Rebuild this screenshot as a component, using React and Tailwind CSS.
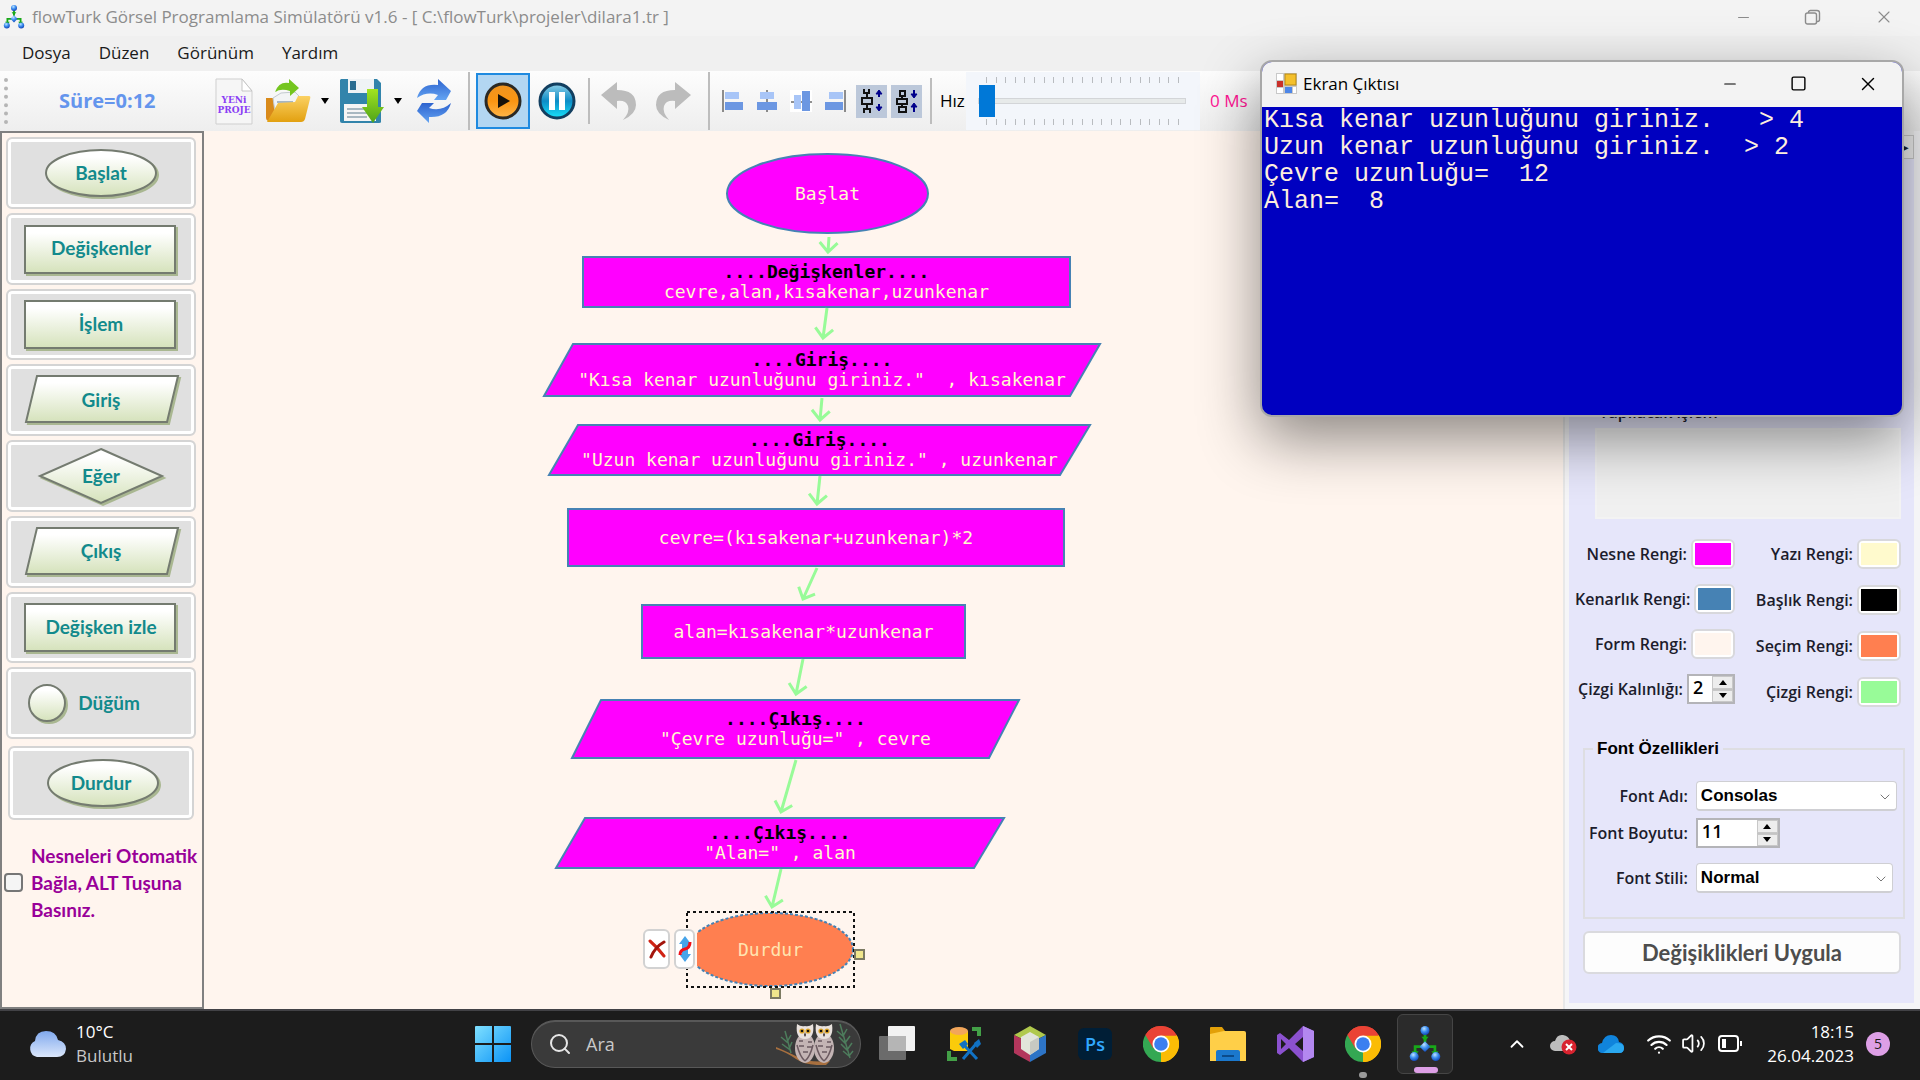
import React from "react";
import { Minus, Square, X, Search, ChevronUp, ChevronDown, Wifi, Volume2 } from "lucide-react";

const NODES = [
  { shape: "ellipse", x: 522, y: 22, w: 203, h: 81, text: "Başlat" },
  { shape: "rect", x: 378, y: 125, w: 489, h: 52, title: "....Değişkenler....", text: "cevre,alan,kısakenar,uzunkenar" },
  { shape: "para", x: 339, y: 212, w: 558, h: 54, title: "....Giriş....", text: '"Kısa kenar uzunluğunu giriniz."  , kısakenar' },
  { shape: "para", x: 344, y: 293, w: 543, h: 52, title: "....Giriş....", text: '"Uzun kenar uzunluğunu giriniz." , uzunkenar' },
  { shape: "rect", x: 363, y: 377, w: 498, h: 59, text: "cevre=(kısakenar+uzunkenar)*2" },
  { shape: "rect", x: 437, y: 473, w: 325, h: 55, text: "alan=kısakenar*uzunkenar" },
  { shape: "para", x: 367, y: 568, w: 449, h: 60, title: "....Çıkış....", text: '"Çevre uzunluğu=" , cevre' },
  { shape: "para", x: 351, y: 686, w: 450, h: 52, title: "....Çıkış....", text: '"Alan=" , alan' },
  { shape: "ellipse", x: 483, y: 781, w: 167, h: 75, text: "Durdur", selected: true },
];

const ARROWS = [
  [625, 106, 624, 121],
  [623, 177, 619, 207],
  [618, 267, 616, 289],
  [616, 345, 613, 373],
  [613, 437, 599, 468],
  [599, 528, 592, 563],
  [592, 629, 577, 681],
  [577, 738, 568, 776],
];

function arrowPath([x1, y1, x2, y2]) {
  const a = Math.atan2(y2 - y1, x2 - x1);
  const arm = (d) => `${x2 - 13 * Math.cos(a + d)} ${y2 - 13 * Math.sin(a + d)}`;
  return `M${x1} ${y1}L${x2} ${y2}M${arm(0.76)}L${x2} ${y2}L${arm(-0.76)}`;
}

function FlowNode({ node }) {
  const { shape, x, y, w, h, title, text, selected } = node;
  const fill = selected ? "#ff7f50" : "#ff00ff";
  const common = { fill, stroke: "#4682b4", strokeWidth: 2 };
  return (
    <div className="absolute flex flex-col items-center justify-center" style={{ left: x, top: y, width: w, height: h }}>
      <svg className="absolute inset-0 h-full w-full overflow-visible" viewBox={`0 0 ${w} ${h}`} aria-hidden="true">
        {shape === "ellipse" && <ellipse cx={w / 2} cy={h / 2} rx={w / 2 - 1} ry={h / 2 - 1} {...common} strokeDasharray={selected ? "3 2" : undefined} />}
        {shape === "rect" && <rect x="1" y="1" width={w - 2} height={h - 2} {...common} />}
        {shape === "para" && <polygon points={`30,1 ${w - 1},1 ${w - 31},${h - 1} 1,${h - 1}`} {...common} />}
      </svg>
      {title && <span className="relative font-bold whitespace-pre text-black">{title}</span>}
      <span className={selected ? "relative whitespace-pre text-[#ffe4b0]" : "relative whitespace-pre text-[#fffacd]"}>{text}</span>
    </div>
  );
}

function Logo({ className }) {
  return (
    <svg className={className} viewBox="0 0 36 40" aria-hidden="true">
      <defs>
        <radialGradient id="ball" cx="0.4" cy="0.3" r="0.7">
          <stop offset="0" stopColor="#bfe3ff" />
          <stop offset="0.5" stopColor="#3d8ff0" />
          <stop offset="1" stopColor="#1447b8" />
        </radialGradient>
      </defs>
      <g fill="none" stroke="#18a818" strokeWidth="3">
        <path d="M18 8v10M14 23H7v8M22 23h7v8" />
      </g>
      <path d="M14 12h8l-4 5zM3 28h8l-4 5zM25 28h8l-4 5z" fill="#18a818" />
      <path d="M18 17l6 6-6 6-6-6z" fill="url(#ball)" />
      <circle cx="18" cy="5" r="5" fill="url(#ball)" />
      <circle cx="6" cy="34" r="5" fill="url(#ball)" />
      <circle cx="30" cy="34" r="5" fill="url(#ball)" />
    </svg>
  );
}

function TitleBar() {
  return (
    <header className="flex h-9 shrink-0 items-center bg-[#f3f3f3] pb-0.5 pl-0.5 text-[#8c8c8c]">
      <Logo className="h-6 w-6" />
      <h1 className="ml-1.5 flex-1 text-[17px] whitespace-nowrap">flowTurk Görsel Programlama Simülatörü v1.6 - [ C:\flowTurk\projeler\dilara1.tr ]</h1>
      <button aria-label="Simge durumuna küçült" className="flex w-[69px] justify-center"><Minus size={17} strokeWidth={1.5} /></button>
      <button aria-label="Önceki boyut" className="flex w-[69px] justify-center">
        <svg width="17" height="17" viewBox="0 0 17 17" fill="none" stroke="currentColor" strokeWidth="1.4">
          <rect x="1.5" y="4" width="11" height="11" rx="2" />
          <path d="M4.5 4V3.500a2 2 0 0 1 2-2h6.500a2.500 2.500 0 0 1 2.500 2.500v6.500a2 2 0 0 1-2 2h-1" />
        </svg>
      </button>
      <button aria-label="Kapat" className="flex w-[73px] justify-center"><X size={20} strokeWidth={1.3} /></button>
    </header>
  );
}

function MenuBar() {
  return (
    <nav className="flex h-[35px] shrink-0 items-center gap-7 bg-[#f0f0f0] pb-0.5 pl-[22px] text-[17px] text-[#1a1a1a]">
      {["Dosya", "Düzen", "Görünüm", "Yardım"].map((m) => <button key={m}>{m}</button>)}
    </nav>
  );
}

const Divider = ({ className = "" }) => <div className={`h-[46px] w-0.5 shrink-0 bg-[#bdbdbd] ${className}`} />;
const Caret = () => <svg width="8" height="6" viewBox="0 0 8 6" aria-hidden="true"><path d="M0 0h8L4 6z" /></svg>;

function NewIcon() {
  return (
    <span className="relative flex h-[47px] w-[38px] flex-col items-center justify-center font-['DejaVu_Serif'] text-[9px] leading-[10px] font-bold text-[#8b3ff5]">
      <svg className="absolute inset-0" width="38" height="47" viewBox="0 0 38 47" aria-hidden="true">
        <path d="M1 1h26l10 12v33H1z" fill="#f6f6f6" stroke="#cfcfcf" />
        <path d="M27 1v12h10z" fill="#fff" stroke="#c5c5c5" />
      </svg>
      <span className="relative mt-2">YENi</span>
      <span className="relative">PROJE</span>
    </span>
  );
}

function OpenIcon() {
  return (
    <svg width="46" height="46" viewBox="0 0 46 46" aria-hidden="true">
      <defs><linearGradient id="fold" x2="0" y2="1"><stop stopColor="#fbd163" /><stop offset="1" stopColor="#e2a010" /></linearGradient></defs>
      <path d="M1 20h8l3 3h6v20H3q-2-1-2-3z" fill="#d98a1a" />
      <path d="M8 20l8-5 14-1 6 6-2 14H10z" fill="#f2f4f5" stroke="#c3cacf" />
      <path d="M12 24h16M12 28h14" stroke="#a7b6c2" strokeWidth="2" />
      <path d="M13 25l17-1 3-6h11q2 0 1 3l-5 20q-1 3-4 3H2z" fill="url(#fold)" />
      <path d="M10 14Q14 3 24 5V1l10 9-9 8v-5Q16 10 10 14z" fill="#74c51f" />
    </svg>
  );
}

function SaveIcon() {
  return (
    <svg width="45" height="46" viewBox="0 0 45 46" aria-hidden="true">
      <defs><linearGradient id="arr" x2="0" y2="1"><stop stopColor="#a2e41f" /><stop offset="1" stopColor="#4ea31a" /></linearGradient></defs>
      <path d="M2 1h36l4 4v39q0 1-2 1H3q-2 0-2-2V2z" fill="#3284ab" />
      <path d="M9 1h26v14H9z" fill="#eff3f5" />
      <path d="M11 3h6v9h-6z" fill="#2a6d91" />
      <path d="M5 26h32v17H5z" fill="#f5f5f5" />
      <path d="M8 31h20M8 35h20M8 39h20" stroke="#8fa4b0" strokeWidth="1.500" />
      <path d="M28 11h11v18h6L34 45 23 29h5z" fill="url(#arr)" />
    </svg>
  );
}

function RefreshIcon() {
  return (
    <svg width="36" height="46" viewBox="0 0 36 46" aria-hidden="true">
      <defs><linearGradient id="rf" x2="0" y2="1"><stop stopColor="#2d63cf" /><stop offset="1" stopColor="#64a4f2" /></linearGradient></defs>
      <path d="M1 20Q5 5 22 7V1l13 12-5 9H18l4-5Q11 13 1 20z" fill="url(#rf)" />
      <path d="M35 25Q31 40 13 39v6L1 33l5-8h12l-5 5q12 4 22-5z" fill="url(#rf)" />
    </svg>
  );
}

function RoundIcon({ pause }) {
  return (
    <svg width="38" height="38" viewBox="0 0 38 38" aria-hidden="true">
      <defs>
        <linearGradient id="gor" x2="0" y2="1"><stop stopColor="#ee9422" /><stop offset="0.5" stopColor="#fb9512" /><stop offset="1" stopColor="#ffb64a" /></linearGradient>
        <linearGradient id="gbl" x2="0" y2="1"><stop stopColor="#8fd0e8" /><stop offset="0.5" stopColor="#0d8cc6" /><stop offset="1" stopColor="#19e3fb" /></linearGradient>
      </defs>
      <circle cx="19" cy="19" r="17" fill={pause ? "url(#gbl)" : "url(#gor)"} stroke={pause ? "#123f60" : "#2b2925"} strokeWidth="3" />
      {pause ? <path d="M11 10h6v18h-6zM21 10h6v18h-6z" fill="#fff" /> : <path d="M14 12l12 7-12 7z" fill="#17120a" />}
    </svg>
  );
}

function Undo({ flip }) {
  return (
    <svg className={flip ? "-scale-x-100" : ""} width="38" height="40" viewBox="0 0 38 40" aria-hidden="true">
      <path d="M1 14L17 1v8Q36 9 36 24 36 33 23 39 30 31 28 25 26 19 17 20v8z" fill="#bcbcbc" />
    </svg>
  );
}

function AlignIcon({ kind }) {
  const bars = {
    left: <><path d="M1 0v22" stroke="#222" /><rect x="3" y="2" width="14" height="7" fill="#a8c5f7" /><rect x="3" y="12" width="18" height="8" fill="#6c97e2" /></>,
    center: <><path d="M11 0v22" stroke="#222" /><rect x="4" y="2" width="14" height="7" fill="#a8c5f7" /><rect x="1" y="12" width="20" height="8" fill="#6c97e2" /></>,
    middle: <><path d="M1 12h21" stroke="#222" /><rect x="4" y="5" width="7" height="14" fill="#a8c5f7" /><rect x="12" y="1" width="8" height="20" fill="#6c97e2" /></>,
    right: <><path d="M21 0v22" stroke="#222" /><rect x="5" y="2" width="14" height="7" fill="#a8c5f7" /><rect x="1" y="12" width="18" height="8" fill="#6c97e2" /></>,
  };
  return <svg width="22" height="22" viewBox="0 0 22 22" aria-hidden="true">{bars[kind]}</svg>;
}

function SpacingIcon({ out }) {
  return (
    <svg width="24" height="26" viewBox="0 0 24 26" fill="none" stroke="#111" strokeWidth="2" aria-hidden="true">
      {out ? <path d="M4 1v4h5V1M7 5v5M2 10h10v6H2zM7 16v4M4 25v-4h6v4" /> : <path d="M5 3h5v5H5zM7 8v3M2 11h10v5H2zM7 16v3M4 19h7v5H4z" />}
      <g stroke="#00008b" fill="#00008b">
        {out ? <><path d="M19 9V3M19 16v6" /><path d="M16 6l3-4 3 4zM16 19l3 4 3-4z" strokeWidth="1" /></> : <><path d="M19 9V2M19 17v7" /><path d="M16 6l3 4 3-4zM16 19l3-4 3 4z" strokeWidth="1" /></>}
      </g>
    </svg>
  );
}

function Ticks() {
  return (
    <div className="ml-2 flex w-[193px] justify-between" aria-hidden="true">
      {Array.from({ length: 21 }, (_, i) => <span key={i} className="h-1.5 w-px bg-[#b9bcc0]" />)}
    </div>
  );
}

function Toolbar() {
  return (
    <div className="flex h-[60px] shrink-0 items-center bg-linear-to-b from-[#fdfdfd] to-[#eeeeee]">
      <div className="ml-1 h-[46px] border-l-4 border-dotted border-[#b5b5b5]" />
      <span className="ml-[51px] w-[156px] text-[20px] font-bold text-[#6495ed]">Süre=0:12</span>
      <button aria-label="Yeni proje"><NewIcon /></button>
      <button aria-label="Aç" className="ml-3"><OpenIcon /></button>
      <button aria-label="Son projeler" className="ml-2.5"><Caret /></button>
      <button aria-label="Kaydet" className="ml-2.5"><SaveIcon /></button>
      <button aria-label="Farklı kaydet" className="ml-2.5"><Caret /></button>
      <button aria-label="Yenile" className="ml-3.5"><RefreshIcon /></button>
      <div className="ml-4 h-[58px] w-0.5 shrink-0 bg-[#bdbdbd]" />
      <button aria-label="Çalıştır" className="ml-1.5 flex h-14 w-[54px] items-center justify-center border-2 border-[#1f8ae0] bg-[#b3d6f2]"><RoundIcon /></button>
      <button aria-label="Duraklat" className="ml-2"><RoundIcon pause /></button>
      <Divider className="ml-3" />
      <button aria-label="Geri al" className="ml-2.5"><Undo /></button>
      <button aria-label="Yinele" className="ml-4"><Undo flip /></button>
      <div className="ml-4 h-[58px] w-0.5 shrink-0 bg-[#bdbdbd]" />
      <div className="ml-3 flex items-center gap-3">
        <button aria-label="Sola hizala"><AlignIcon kind="left" /></button>
        <button aria-label="Ortala"><AlignIcon kind="center" /></button>
        <button aria-label="Dikey ortala" className="bg-white"><AlignIcon kind="middle" /></button>
        <button aria-label="Sağa hizala"><AlignIcon kind="right" /></button>
      </div>
      <button aria-label="Aralığı artır" className="ml-2.5 flex h-[33px] w-[31px] items-center justify-center bg-[#bcc8da]"><SpacingIcon out /></button>
      <button aria-label="Aralığı azalt" className="ml-1 flex h-[33px] w-[31px] items-center justify-center bg-[#bcc8da]"><SpacingIcon /></button>
      <Divider className="ml-2" />
      <label htmlFor="speed" className="ml-2 w-[26px] text-[17px] text-black">Hız</label>
      <div className="flex h-[58px] w-[234px] flex-col justify-center bg-[#f3f6fb] px-3">
        <Ticks />
        <input id="speed" type="range" min="0" max="20" defaultValue="0" className="my-0.5 h-8 w-[208px] appearance-none bg-transparent [&::-webkit-slider-runnable-track]:h-1.5 [&::-webkit-slider-runnable-track]:border [&::-webkit-slider-runnable-track]:border-[#d3d5d8] [&::-webkit-slider-runnable-track]:bg-[#e7eaea] [&::-webkit-slider-thumb]:-mt-3.5 [&::-webkit-slider-thumb]:h-8 [&::-webkit-slider-thumb]:w-4 [&::-webkit-slider-thumb]:appearance-none [&::-webkit-slider-thumb]:bg-[#0078d7]" />
        <Ticks />
      </div>
      <span className="ml-2.5 w-12 text-[17px] whitespace-nowrap text-[#ff1493]">0 Ms</span>
      <Divider className="ml-0.5" />
    </div>
  );
}

function PaletteShape({ kind }) {
  const shapes = {
    ellipse: <ellipse cx="95" cy="36" rx="55" ry="23" />,
    rect: <rect x="19" y="13" width="150" height="47" />,
    para: <path d="M31 12H172L161 58H20z" />,
    diamond: <path d="M95 9l61 27-61 27-61-27z" />,
    circle: <circle cx="41" cy="36" r="18" />,
  };
  return (
    <svg className="absolute -inset-0.5 m-auto drop-shadow-[2px_2px_0_#a9b791]" width="190" height="72" viewBox="0 0 190 72" fill="url(#pal)" stroke="#747b70" strokeWidth="2" aria-hidden="true">
      <defs><linearGradient id="pal" x2="0" y2="1"><stop offset="0.150" stopColor="#ffffff" /><stop offset="1" stopColor="#d5e2bb" /></linearGradient></defs>
      {shapes[kind]}
    </svg>
  );
}

function PaletteButton({ kind, label }) {
  return (
    <button className="relative flex w-full items-center justify-center rounded-md border-2 border-[#d4d4d4] bg-[#e0e0e0] ring-3 ring-white ring-inset">
      <PaletteShape kind={kind} />
      <span className={kind === "circle" ? "relative ml-4" : "relative"}>{label}</span>
    </button>
  );
}

const PALETTE = [
  ["ellipse", "Başlat"],
  ["rect", "Değişkenler"],
  ["rect", "İşlem"],
  ["para", "Giriş"],
  ["diamond", "Eğer"],
  ["para", "Çıkış"],
  ["rect", "Değişken izle"],
  ["circle", "Düğüm"],
];

function Palette() {
  return (
    <aside className="w-[204px] shrink-0 border-2 border-[#808080] bg-[#fff5ee] pt-1 pl-1 font-['Lato'] text-[19px] font-bold text-[#128a8c]">
      <div className="grid h-[602px] w-[190px] grid-rows-8 gap-1">
        {PALETTE.map(([kind, label]) => <PaletteButton key={label} kind={kind} label={label} />)}
      </div>
      <div className="mt-[7px] grid h-[74px] w-[188px] pl-0.5"><PaletteButton kind="ellipse" label="Durdur" /></div>
      <label className="-ml-1 mt-[22px] flex items-center pl-0.5 leading-[27px] text-[#990099]">
        <input type="checkbox" className="mr-2 h-[19px] w-[19px] shrink-0 appearance-none rounded-[4px] border-2 border-[#767676] bg-[#f5f5f5]" />
        <span className="whitespace-nowrap">Nesneleri Otomatik<br />Bağla, ALT Tuşuna<br />Basınız.</span>
      </label>
    </aside>
  );
}

function Canvas() {
  return (
    <main className="relative min-w-0 flex-1 overflow-hidden bg-[#fff5ee] font-['DejaVu_Sans_Mono',monospace] text-[18px] leading-5">
      {NODES.map((n) => <FlowNode key={n.y} node={n} />)}
      <svg className="pointer-events-none absolute inset-0 h-full w-full" aria-hidden="true">
        <g fill="none" stroke="#98fb98" strokeWidth="3">{ARROWS.map((a) => <path key={a[1]} d={arrowPath(a)} />)}</g>
        <rect x="483" y="781" width="167" height="75" fill="none" stroke="#111" strokeWidth="2" strokeDasharray="3 3" />
        <g fill="#f0e68c" stroke="#7c7a62" strokeWidth="2">
          <rect x="651" y="819" width="9" height="9" />
          <rect x="567" y="858" width="9" height="9" />
        </g>
      </svg>
      <div className="absolute top-[798px] left-[439px] flex gap-1 bg-[#fff5ee] pr-0.5">
        <button aria-label="Sil" className="flex h-[40px] w-[27px] items-center justify-center rounded-md border-2 border-[#d2d2d2] bg-white">
          <svg width="18" height="20" viewBox="0 0 18 20" fill="none" strokeLinecap="round" aria-hidden="true"><path d="M2 2Q9 8 16 17" stroke="#d02314" strokeWidth="3" /><path d="M16 3Q7 8 3 18" stroke="#a3150d" strokeWidth="3" /></svg>
        </button>
        <button aria-label="Bağlantıyı kes" className="flex h-[40px] w-[21px] items-center justify-center rounded-md border-2 border-[#d2d2d2] bg-white">
          <svg width="14" height="26" viewBox="0 0 14 26" aria-hidden="true"><path d="M7 0l6 8h-3v10h3l-6 8-6-8h3V8H1z" fill="#46a4ea" /><path d="M2 19Q2 14 7 13T12 6" fill="none" stroke="#f01018" strokeWidth="3" /></svg>
        </button>
      </div>
    </main>
  );
}

function Swatch({ label, color }) {
  return (
    <div className="flex items-center justify-end gap-1">
      <span className="whitespace-nowrap">{label}</span>
      <button aria-label={label} className="h-[30px] w-[44px] rounded-md border-2 border-[#d8d8dc] bg-white p-0.5"><span className={`block h-full w-full ${color}`} /></button>
    </div>
  );
}

function Spinner({ id, value, width }) {
  return (
    <div className={`flex h-[30px] border-2 border-[#b4b4b8] bg-white ${width}`}>
      <input id={id} defaultValue={value} className="w-0 min-w-0 flex-1 pb-1 pl-1 text-[18px] leading-6 font-semibold text-black outline-none" />
      <span className="flex w-[21px] flex-col gap-px bg-[#c4c4c4]">
        <button aria-label="Artır" className="flex flex-1 items-center justify-center border border-[#c8c8c8] bg-[#ededed]"><svg width="8" height="5" viewBox="0 0 8 5"><path d="M0 5h8L4 0z" /></svg></button>
        <button aria-label="Azalt" className="flex flex-1 items-center justify-center border border-[#c8c8c8] bg-[#ededed]"><svg width="8" height="5" viewBox="0 0 8 5"><path d="M0 0h8L4 5z" /></svg></button>
      </span>
    </div>
  );
}

function Select({ id, value, width }) {
  return (
    <div className={`relative h-[30px] ${width}`}>
      <select id={id} defaultValue={value} className="h-full w-full appearance-none rounded-sm border border-b-2 border-[#cfcfd3] bg-white pl-1 font-['Liberation_Sans'] text-[17px] font-bold text-black"><option>{value}</option></select>
      <ChevronDown className="pointer-events-none absolute top-2 right-1 text-[#777]" size={16} strokeWidth={1.500} />
    </div>
  );
}

function Properties() {
  return (
    <aside className="flex w-[357px] shrink-0 flex-col border-l-2 border-[#e8e8e8] bg-[#f5f5f7] pr-1.5 pb-1.5 pl-1 font-['Open_Sans'] text-[16px] font-semibold text-[#1c1c2c]">
      <div className="flex h-7 justify-end bg-[#f0f0f0]"><button aria-label="Sekmeler" className="mt-1 w-5 border border-[#c8c8c8] text-[14px] leading-none">▸</button></div>
      <div className="flex flex-1 flex-col bg-[#e6e6fa] pr-[13px] pl-3.5">
        <label htmlFor="todo" className="mt-[239px] ml-4 leading-7">Yapılacak işlem</label>
        <textarea id="todo" readOnly className="ml-3 mt-0.5 h-[91px] resize-none border-2 border-[#f3f3f3] bg-[#f0f0f0]" />
        <div className="mt-5 flex justify-between">
          <div className="-ml-2 flex w-[160px] flex-col gap-[15px]">
            <Swatch label="Nesne Rengi:" color="bg-[#ff00ff]" />
            <Swatch label="Kenarlık Rengi:" color="bg-[#4682b4]" />
            <Swatch label="Form Rengi:" color="bg-[#fff5ee]" />
            <div className="flex items-center justify-end gap-1">
              <label htmlFor="thick" className="whitespace-nowrap">Çizgi Kalınlığı:</label>
              <Spinner id="thick" value="2" width="w-[48px]" />
            </div>
          </div>
          <div className="flex w-[150px] flex-col gap-4">
            <Swatch label="Yazı Rengi:" color="bg-[#fffacd]" />
            <Swatch label="Başlık Rengi:" color="bg-black" />
            <Swatch label="Seçim Rengi:" color="bg-[#ff7f50]" />
            <Swatch label="Çizgi Rengi:" color="bg-[#98fb98]" />
          </div>
        </div>
        <fieldset className="mt-[30px] -mr-1 h-[182px] border-2 border-[#dedee2] pl-1">
          <legend className="ml-1 px-1 font-['Liberation_Sans'] text-[17px] leading-6 font-bold text-black">Font Özellikleri</legend>
          <div className="mt-5 grid grid-cols-[auto_1fr] items-center gap-x-2 gap-y-[7px]">
            <label htmlFor="font" className="text-right whitespace-nowrap">Font Adı:</label>
            <Select id="font" value="Consolas" width="w-[201px]" />
            <label htmlFor="size" className="text-right whitespace-nowrap">Font Boyutu:</label>
            <Spinner id="size" value="11" width="w-[84px]" />
            <label htmlFor="style" className="mt-2 text-right whitespace-nowrap">Font Stili:</label>
            <div className="mt-2"><Select id="style" value="Normal" width="w-[197px]" /></div>
          </div>
        </fieldset>
        <button className="mt-3 h-[43px] rounded-md border-2 border-[#dadade] bg-[#fdfdfd] font-['Lato'] text-[22px] font-bold text-[#4d4d4d]">Değişiklikleri Uygula</button>
      </div>
    </aside>
  );
}

function OutputWindow() {
  return (
    <section className="absolute top-[60px] right-4 w-[644px] overflow-hidden rounded-xl border-2 border-[#a8a8a8] bg-[#0000c0] shadow-[0_22px_60px_rgba(0,0,0,0.45)]">
      <div className="flex h-[45px] items-center bg-[#f3f3f3] pb-0.5 pl-3.5 text-black">
        <svg width="21" height="21" viewBox="0 0 21 21" aria-hidden="true">
          <rect width="21" height="21" fill="#c9c9c9" />
          <rect x="1" y="1" width="6" height="6" fill="#fff" /><rect x="1" y="15" width="6" height="5" fill="#fff" /><rect x="17" y="14" width="3" height="6" fill="#fff" />
          <rect x="9" y="1" width="11" height="11" fill="#f4c02c" stroke="#b98a12" /><rect x="1" y="8" width="6" height="6" fill="#c9302a" /><rect x="9" y="14" width="7" height="6" fill="#4d86e8" />
        </svg>
        <h2 className="ml-1.5 flex-1 text-[17px]">Ekran Çıktısı</h2>
        <button aria-label="Küçült" className="flex w-[69px] justify-center"><Minus size={18} strokeWidth={1.500} /></button>
        <button aria-label="Büyüt" className="flex w-[69px] justify-center"><Square size={17} strokeWidth={2} /></button>
        <button aria-label="Kapat" className="flex w-[69px] justify-center"><X size={22} strokeWidth={1.500} /></button>
      </div>
      <pre className="h-[308px] pl-0.5 font-['Liberation_Mono',monospace] text-[25px] leading-[27px] text-[#fdeedd]">
        {"Kısa kenar uzunluğunu giriniz.   > 4\nUzun kenar uzunluğunu giriniz.  > 2\nÇevre uzunluğu=  12\nAlan=  8"}
      </pre>
    </section>
  );
}

function Chrome() {
  return (
    <svg width="36" height="36" viewBox="0 0 36 36" aria-hidden="true">
      <path d="M18 18L2.400 9A18 18 0 0 1 33.600 9z" fill="#ea4335" />
      <path d="M18 18L33.600 9A18 18 0 0 1 18 36z" fill="#fbbc05" />
      <path d="M18 18v18A18 18 0 0 1 2.400 9z" fill="#34a853" />
      <path d="M18 9.500h15.800A18 18 0 0 1 18 36l7.800-14z" fill="#fbbc05" />
      <path d="M18 9.500h15.800A18 18 0 0 0 2.400 9l8 13.500z" fill="#ea4335" />
      <circle cx="18" cy="18" r="8.500" fill="#fff" /><circle cx="18" cy="18" r="6.800" fill="#3b7ff0" />
    </svg>
  );
}

function Owls() {
  const owl = (x) => (
    <g transform={`translate(${x} 0)`}>
      <ellipse cx="9" cy="25" rx="10" ry="15" fill="#c3b4b4" />
      <path d="M1 22q3 12 8 16M17 22q-3 12-8 16M3 18h4M3 23h5M12 19h4M11 24h5M7 29h5" stroke="#6b5a60" strokeWidth="1.500" fill="none" />
      <path d="M1 1q4 3 8 2 4 1 8-2 2 15-8 15T1 1z" fill="#e9e2de" />
      <circle cx="6" cy="8" r="2.600" fill="#e2a92c" /><circle cx="12" cy="8" r="2.600" fill="#e2a92c" />
      <circle cx="6" cy="8" r="1.300" fill="#111" /><circle cx="12" cy="8" r="1.300" fill="#111" />
      <path d="M9 9l-1 3 1 2 1-2z" fill="#3a3030" />
    </g>
  );
  return (
    <svg width="80" height="42" viewBox="0 0 80 42" aria-hidden="true">
      <g stroke="#4d7c5c" strokeWidth="1.500"><path d="M64 1l10 34M61 8l6 5 4-7M63 14l6 6 5-7M65 21l6 6 5-7M67 28l6 5 4-5M9 8l6 22M5 14l6 5 4-7M6 21l7 5 3-7" fill="none" /></g>
      <path d="M0 24Q14 30 24 35t30 3l-4 4Q30 43 20 36T0 26z" fill="#a8703f" />
      {owl(20)}{owl(39)}
    </svg>
  );
}

function Taskbar() {
  return (
    <footer className="grid h-[71px] shrink-0 grid-cols-[1fr_auto_1fr] items-center border-t-2 border-[#424246] bg-[#1c1c1c] pb-1 text-[17px] leading-6 text-white">
      <button className="flex items-center gap-2.5 pl-7 text-left">
        <svg width="38" height="26" viewBox="0 0 38 26" aria-hidden="true">
          <defs><linearGradient id="cl" x2="0" y2="1"><stop stopColor="#80a9ee" /><stop offset="1" stopColor="#dbe7fb" /></linearGradient></defs>
          <path d="M9 26a8.500 8.500 0 0 1-2-16Q8 0 18 0t12 9q8 2 8 9-1 8-9 8z" fill="url(#cl)" />
        </svg>
        <span>10°C<br /><span className="text-[#c8c8c8]">Bulutlu</span></span>
      </button>
      <div className="ml-2 flex items-center">
        <button aria-label="Başlat menüsü">
          <svg width="36" height="36" viewBox="0 0 36 36" aria-hidden="true"><defs><linearGradient id="win" x2="1" y2="1"><stop stopColor="#7fe0ff" /><stop offset="1" stopColor="#0b93f6" /></linearGradient></defs><path d="M0 1q0-1 1-1h16v17H0zM19 0h16q1 0 1 1v16H19zM0 19h17v17H1q-1 0-1-1zM19 19h17v16q0 1-1 1H19z" fill="url(#win)" /></svg>
        </button>
        <label className="ml-5 flex h-12 w-[330px] items-center rounded-full border border-t-2 border-[#585858] bg-[#3a3a3a] pl-4">
          <Search size={24} className="text-[#e6e6e6]" />
          <input type="search" placeholder="Ara" className="ml-3.5 w-0 min-w-0 flex-1 text-[18px] text-white outline-none placeholder:text-[#c9c9c9]" />
          <span className="mr-1"><Owls /></span>
        </label>
        <div className="ml-[18px] flex items-center gap-[31px]">
          <button aria-label="Görev görünümü">
            <svg width="36" height="36" viewBox="0 0 36 36" aria-hidden="true"><rect y="10" width="27" height="24" rx="1" fill="#6b6b6b" /><rect x="9" width="27" height="25" rx="1" fill="#f2f2f2" /><path d="M9 10h18v15H9z" fill="#b5b5b5" /></svg>
          </button>
          <button aria-label="SQL Server">
            <svg width="36" height="36" viewBox="0 0 36 36" aria-hidden="true"><path d="M26 3h7v7M3 25v8h8" fill="none" stroke="#43a047" strokeWidth="4" /><path d="M4 5h18v20H8l-4-2z" fill="#fbcb0a" /><ellipse cx="13" cy="5" rx="9" ry="4" fill="#f2a65a" /><path d="M17 18l14 15M30 18L17 33" stroke="#1172c4" strokeWidth="3" /><path d="M13 18l6-4 3 4-5 5zM28 17l5-4 2 5-4 4z" fill="#1172c4" /></svg>
          </button>
          <button aria-label="NetBeans">
            <svg width="34" height="36" viewBox="0 0 34 36" aria-hidden="true"><path d="M17 0L33 9 17 17 1 9z" fill="#b0c94c" /><path d="M1 9l16 8v19L1 27z" fill="#b3365c" /><path d="M33 9v18l-16 9V17z" fill="#2d74c6" /><path d="M17 6l9 5v12l-9 6-9-6V11z" fill="#e2e5da" /><path d="M17 16v13l9-6V11z" fill="#c7c9c2" /></svg>
          </button>
          <button aria-label="Photoshop" className="flex h-8 w-[34px] items-center justify-center rounded-md bg-[#001e36] text-[18px] font-semibold text-[#31a8ff]">Ps</button>
          <button aria-label="Chrome"><Chrome /></button>
          <button aria-label="Dosya Gezgini">
            <svg width="36" height="34" viewBox="0 0 36 34" aria-hidden="true"><path d="M0 1q0-1 1-1h11l3 4v6H0z" fill="#e3a008" /><path d="M0 7l14-3h20q2 0 2 2v28H0z" fill="#ffcf48" /><path d="M6 34V25q0-2 2-2h20q2 0 2 2v9z" fill="#1b78cd" /><path d="M12 29h12" stroke="#0b4b8a" strokeWidth="2" /></svg>
          </button>
          <button aria-label="Visual Studio">
            <svg width="37" height="36" viewBox="0 0 37 36" aria-hidden="true"><path d="M26 0l11 5v26l-11 5-14-14-9 7-3-2V9l3-2 9 7zM26 11l-8 7 8 7zM4 13v10l5-5z" fill="#8b51cf" fillRule="evenodd" /><path d="M26 0l11 5v26l-11 5z" fill="#b388f0" /></svg>
          </button>
          <button aria-label="Chrome penceresi" className="relative"><Chrome /><span className="absolute -bottom-4 left-3.5 h-1.5 w-2 rounded-full bg-[#9a9a9a]" /></button>
        </div>
        <button aria-label="flowTurk" className="relative ml-4 flex h-[60px] w-14 items-center justify-center rounded-md border border-[#454545] bg-[#2b2b2b]">
          <Logo className="h-9 w-9" /><span className="absolute bottom-0 left-4 h-1.5 w-6 rounded-full bg-[#dd9fe6]" />
        </button>
      </div>
      <div className="flex items-center justify-end pr-[30px]">
        <ChevronUp size={22} />
        <svg className="ml-[22px]" width="27" height="22" viewBox="0 0 27 22" aria-hidden="true"><path d="M5 18a5 5 0 0 1 0-10Q7 1 13 2t7 6 3 10z" fill="#bdbdbd" /><circle cx="19" cy="14" r="7.500" fill="#d8232f" /><path d="M16 11l6 6m0-6l-6 6" stroke="#fff" strokeWidth="2" /></svg>
        <svg className="ml-[21px]" width="26" height="18" viewBox="0 0 26 18" aria-hidden="true"><path d="M5 18a5 5 0 0 1-1-10Q6 0 13 0t8 7q5 1 5 6t-5 5z" fill="#1084dc" /><path d="M5 18l13-10q8 0 8 5t-5 5z" fill="#2aa8f0" /></svg>
        <Wifi className="ml-[22px]" size={26} />
        <Volume2 className="ml-[9px]" size={25} strokeWidth={1.700} />
        <svg className="ml-3" width="25" height="17" viewBox="0 0 25 17" fill="none" stroke="#fff" strokeWidth="2" aria-hidden="true"><rect x="1" y="1" width="19" height="15" rx="3" /><path d="M23 6v5" /><rect x="4" y="4" width="4" height="9" fill="#fff" stroke="none" /></svg>
        <time className="ml-6 text-right">18:15<br />26.04.2023</time>
        <span className="ml-3 flex h-6 w-6 items-center justify-center rounded-full bg-[#dd9fe6] text-[14px] text-[#1c1c1c]">5</span>
      </div>
    </footer>
  );
}

export default function App() {
  return (
    <div className="relative flex h-screen flex-col overflow-hidden bg-[#f0f0f0] font-['Open_Sans',sans-serif]">
      <TitleBar />
      <MenuBar />
      <Toolbar />
      <div className="flex min-h-0 flex-1">
        <Palette />
        <Canvas />
        <Properties />
      </div>
      <OutputWindow />
      <div className="relative"><Taskbar /></div>
    </div>
  );
}
